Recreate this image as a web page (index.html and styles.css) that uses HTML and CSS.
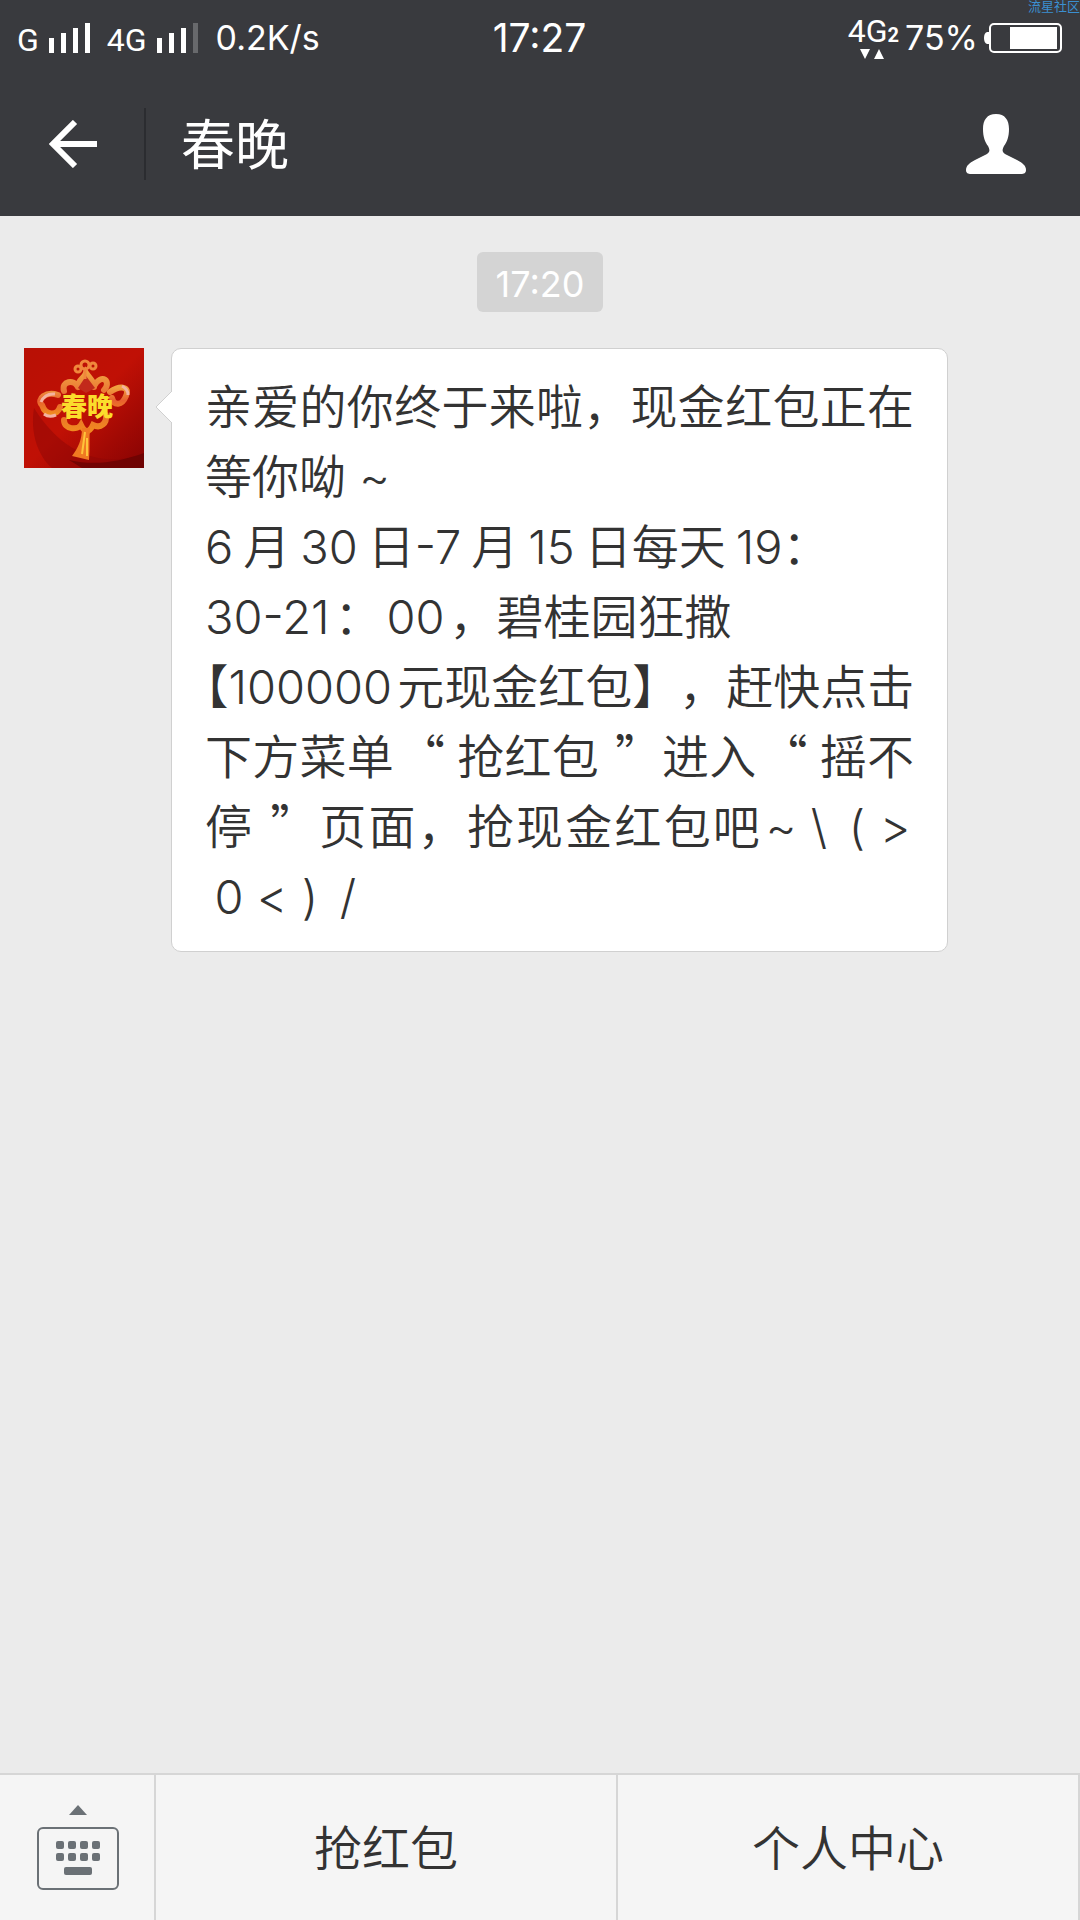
FILE: index.html
```html
<!DOCTYPE html>
<html lang="zh-CN">
<head>
  <meta charset="utf-8">
  <meta name="viewport" content="width=device-width, initial-scale=1">
  <title>春晚</title>
  <link rel="stylesheet" href="styles.css">
</head>
<body>
  <header class="top">
    <div class="status">
      <div class="status-left">
        <span class="net">G</span>
        <svg width="41" height="30" viewBox="0 0 41 30" aria-hidden="true"><path fill="#fff" d="M0 15h5v15H0zM12 10h5v20h-5zM24 5h5v25h-5zM36 0h5v30h-5z"/></svg>
        <span class="net net-second">4G</span>
        <svg width="41" height="30" viewBox="0 0 41 30" aria-hidden="true"><path fill="#fff" d="M0 15h5v15H0zM12 10h5v20h-5zM24 5h5v25h-5z"/><path fill="#68696c" d="M36 0h5v30h-5z"/></svg>
        <span class="speed">0.2K/s</span>
      </div>
      <time class="clock">17:27</time>
      <div class="status-right">
        <div class="data">
          <span class="net">4G<b class="sim">2</b></span>
          <svg class="updown" width="24" height="10" viewBox="0 0 24 10" aria-hidden="true"><path fill="#fff" d="M0 0h10L5 10zM14 10h10L19 0z"/></svg>
        </div>
        <span class="percent">75%</span>
        <svg width="78" height="30" viewBox="0 0 78 30" aria-hidden="true"><path fill="#fff" d="M5 9v12H3q-3-1-3-6t3-6z"/><rect x="6" y="1" width="71" height="28" rx="4" fill="none" stroke="#fff" stroke-width="2"/><path fill="#fff" d="M26 4h47v22H26z"/></svg>
      </div>
      <span class="watermark">流星社区</span>
    </div>
    <nav class="bar">
      <button class="back" type="button" aria-label="返回">
        <svg width="48" height="48" viewBox="0 0 48 48" aria-hidden="true"><path d="M26 2 4 24l22 22M4 24h44" fill="none" stroke="#fff" stroke-width="6"/></svg>
      </button>
      <h1 class="title">春晚</h1>
      <button class="profile" type="button" aria-label="个人资料">
        <svg width="62" height="60" viewBox="0 0 62 60" aria-hidden="true"><path fill="#fff" d="M31 0c9 0 13 6 13 15 0 8-2 13-5 17-2 4-2 6 1 8l12 6c6 3 9 6 9 10 0 3-2 4-5 4H6c-3 0-5-1-5-4 0-4 3-7 9-10l12-6c3-2 3-4 1-8-3-4-5-9-5-17C18 6 22 0 31 0z"/></svg>
      </button>
    </nav>
  </header>

  <main class="chat">
    <time class="stamp">17:20</time>
    <article class="message">
      <svg width="120" height="120" viewBox="0 0 120 120" role="img" aria-label="春晚">
        <defs>
          <linearGradient id="red" x1="0" y1="0" x2="1" y2="1"><stop offset="0" stop-color="#b81005"/><stop offset=".5" stop-color="#c01005"/><stop offset="1" stop-color="#860303"/></linearGradient>
          <linearGradient id="gold" x1="0" y1="0" x2="0" y2="1"><stop offset="0" stop-color="#f0a040"/><stop offset=".5" stop-color="#e8602f"/><stop offset="1" stop-color="#f08a20"/></linearGradient>
        </defs>
        <path fill="url(#red)" d="M0 0h120v120H0z"/>
        <path fill="#8d0505" opacity=".5" d="M10 60c-4 25 4 48 18 60h92v-14c-40 14-80 2-110-46z"/>
        <path fill="#5c0202" opacity=".6" d="M45 112c25 6 50 2 75-7v15H58z"/>
        <g fill="none" stroke="url(#gold)" stroke-width="6" stroke-linecap="round">
          <path d="M40 43c-3-10 10-12 14-4M54 39c0-8 6-8 8-14 4 6 8 8 8 14M70 38c8-14 18-4 10 4M40 72c0 10 14 10 17 5 4 8 8 8 12 0 8 4 14-2 13-10"/>
          <path d="M34 47c-12-4-22 4-16 10 4 12 16 10 18 2M86 44c12-8 20-4 16 4-4 10-12 10-14 2"/>
        </g>
        <path fill="#c22a1b" d="M54 40l8-12 9 12-9 5z"/>
        <g fill="none" stroke="#f0873c" stroke-width="3"><circle cx="61" cy="17" r="4"/><circle cx="54" cy="21" r="3"/><circle cx="69" cy="18" r="3"/><path d="M61 21v10"/></g>
        <path d="M17 54q4-9 14-8M98 38q6 3 6 9M20 66q5 4 12 1" fill="none" stroke="#f4b2a0" stroke-width="3"/>
        <path fill="#f07a22" d="M58 80h8c-1 10 0 20-1 32l-17-4c6-8 10-16 10-28z"/>
        <path d="M61 84l-3 22M63 90v18" stroke="#ffc43a" stroke-width="2"/>
        <text x="37" y="68" class="avatar-text">春晚</text>
      </svg>
      <div class="bubble">
        <svg class="tail" width="18" height="34" viewBox="0 0 18 34" aria-hidden="true"><path fill="#fff" d="M18 0v34l-2-2L1 17 16 2z"/><path fill="none" stroke="#d0d0d0" d="M17 1 1 17l16 16"/></svg>
        <p class="text">
          <span class="line full">亲爱的你终于来啦，现金红包正在</span>
          <span class="line">等你呦 ~</span>
          <span class="line">6<span class="spaced">月</span>30<span class="spaced before">日</span>-7<span class="spaced">月</span>15<span class="spaced before">日</span>每天<span class="spaced before">19</span>：</span>
          <span class="line">30-21<span class="tight">：</span>00<span class="tight before">，</span>碧桂园狂撒</span>
          <span class="line full"><span class="half">【</span>100000<span class="tight before">元</span>现金红包】，赶快点击</span>
          <span class="line full">下方菜单<span class="open">“</span>抢红包<span class="close">”</span>进入<span class="open">“</span>摇不</span>
          <span class="line full">停<span class="close">”</span>页面，抢现金红包吧<span class="mark">~</span><span class="mark">\</span><span class="mark">(</span><span class="mark">&gt;</span></span>
          <span class="line"><span class="mark wide">0</span><span class="mark">&lt;</span><span class="mark">)</span><span class="mark">/</span></span>
        </p>
      </div>
    </article>
  </main>

  <footer class="menu">
    <button class="keyboard" type="button" aria-label="切换键盘">
      <svg width="82" height="86" viewBox="0 0 82 86" aria-hidden="true"><g fill="#6b7176"><path d="M41 0l9 10H32z"/><rect x="19" y="36" width="8" height="8" rx="2"/><rect x="31" y="36" width="8" height="8" rx="2"/><rect x="43" y="36" width="8" height="8" rx="2"/><rect x="55" y="36" width="8" height="8" rx="2"/><rect x="19" y="48" width="8" height="8" rx="2"/><rect x="31" y="48" width="8" height="8" rx="2"/><rect x="43" y="48" width="8" height="8" rx="2"/><rect x="55" y="48" width="8" height="8" rx="2"/><rect x="27" y="62" width="28" height="8" rx="2"/></g><rect x="1" y="23" width="80" height="61" rx="5" fill="none" stroke="#6b7176" stroke-width="2"/></svg>
    </button>
    <button class="item" type="button">抢红包</button>
    <button class="item" type="button">个人中心</button>
  </footer>
</body>
</html>
```
FILE: styles.css
```css
* {
  box-sizing: border-box;
}

body {
  margin: 0;
  min-height: 100vh;
  display: flex;
  flex-direction: column;
  background: #ebebeb;
  color: #333;
  font-family: Inter, "Noto Sans CJK SC", sans-serif;
}

button {
  margin: 0;
  padding: 0;
  border: 0;
  background: none;
  color: inherit;
  font: inherit;
  cursor: pointer;
}

svg {
  display: block;
  flex: none;
}

.top {
  background: #393a3e;
  color: #fff;
}

/* Status bar */
.status {
  position: relative;
  display: grid;
  grid-template-columns: 1fr auto 1fr;
  height: 72px;
  padding: 0 18px 0 17px;
  line-height: 76px;
}

.status-left,
.status-right {
  display: flex;
  align-items: center;
}

.status-left {
  height: 76px;
}

.status-right {
  justify-content: flex-end;
  gap: 6px;
}

.net {
  font-family: Roboto, sans-serif;
  font-size: 32px;
  line-height: 28px;
}

.status-left .net {
  margin: 4px 10px 0 0;
}

.status-left .net-second {
  margin-left: 17px;
}

.speed {
  margin-left: 18px;
  font-size: 34px;
}

.clock {
  font-size: 39px;
}

.data {
  display: flex;
  flex-direction: column;
}

.sim {
  font-size: 20px;
}

.updown {
  margin-left: 12px;
}

.percent {
  font-size: 34px;
}

.watermark {
  position: absolute;
  top: 0;
  right: 0;
  color: #3b8fd0;
  font-size: 13px;
  line-height: 13px;
}

/* Title bar */
.bar {
  display: flex;
  align-items: center;
  height: 144px;
  padding-right: 53px;
}

.back {
  display: flex;
  align-items: center;
  height: 72px;
  padding: 0 47px 0 49px;
  border-right: 2px solid #2b2c30;
}

.title {
  flex: 1;
  margin: 0;
  padding: 4px 0 0 35px;
  font-size: 54px;
  font-weight: 400;
  line-height: 72px;
}

/* Conversation */
.chat {
  flex: 1;
  display: flex;
  flex-direction: column;
  padding: 36px 24px;
}

.stamp {
  align-self: center;
  padding: 4px 19px 0;
  border-radius: 6px;
  background: #d4d4d4;
  color: #fff;
  font-size: 36px;
  font-weight: 400;
  line-height: 56px;
}

.message {
  display: flex;
  align-items: flex-start;
  gap: 27px;
  margin-top: 36px;
}

.avatar-text {
  fill: #fbdc2c;
  font-size: 26px;
  font-weight: 900;
}

.bubble {
  position: relative;
  max-width: 777px;
  padding: 23px 33px 19px;
  border: 1px solid #d0d0d0;
  border-radius: 10px;
  background: #fff;
}

.tail {
  position: absolute;
  top: 41px;
  left: -17px;
}

.text {
  margin: 0;
  width: 709px;
  max-width: 100%;
  font-size: 47px;
  font-weight: 350;
  line-height: 70px;
  text-spacing-trim: space-all;
}

.line {
  display: block;
  white-space: nowrap;
}

.full {
  text-align: justify;
  text-align-last: justify;
}

.half {
  font-feature-settings: "halt";
}

.spaced {
  margin: 0 10px;
}

.tight {
  margin: 0 5px;
}

.before {
  margin-right: 0;
}

.open,
.close {
  font-family: "Noto Sans CJK SC", sans-serif;
  line-height: 1;
}

.open {
  margin: 0 12px 0 4px;
}

.close {
  margin-left: 16px;
}

.mark {
  display: inline-block;
  width: 38px;
  text-align: center;
  text-align-last: center;
}

.wide {
  width: 48px;
}

/* Bottom menu */
.menu {
  display: flex;
  height: 147px;
  border-top: 2px solid #d6d6d6;
  background: #f5f5f5;
}

.keyboard {
  display: flex;
  align-items: center;
  padding: 0 35px 0 37px;
  border-right: 2px solid #d6d6d6;
}

.item {
  flex: 1;
  padding-bottom: 6px;
  border-right: 2px solid #d6d6d6;
  font-size: 48px;
  font-weight: 350;
}
```
